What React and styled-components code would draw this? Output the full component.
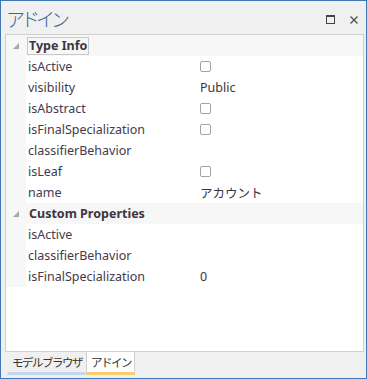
import React from 'react';
import styled, { createGlobalStyle } from 'styled-components';

const GlobalStyle = createGlobalStyle`
    html, body {
        margin: 0;
        padding: 0;
        background: #f0f0f0;
    }
    * {
        box-sizing: border-box;
    }
`;

const Frame = styled.div`
    width: 367px;
    height: 379px;
    display: flex;
    flex-direction: column;
    border: 1px solid #3f76b5;
    background: #f0f0f0;
    font-family: 'Noto Sans', 'Noto Sans CJK JP', sans-serif;
`;

const TitleBar = styled.div`
    height: 33px;
    display: flex;
    align-items: center;
    padding: 0 8px 0 5px;
`;

const Title = styled.div`
    flex: 1;
    font-family: 'Noto Sans CJK JP', sans-serif;
    font-size: 19px;
    font-weight: 300;
    letter-spacing: -4px;
    color: #3a6594;
    margin-top: 1px;
`;

const TitleButtons = styled.div`
    display: flex;
    align-items: center;
    gap: 15px;
    color: #555;
    margin-top: 4px;
`;

const Panel = styled.div`
    flex: 1;
    margin: 0 2px 0 4px;
    border: 1px solid #cfcfcf;
    background: #fff;
    display: flex;
    flex-direction: column;
`;

const Row = styled.div`
    height: 21px;
    display: grid;
    grid-template-columns: 20px 171px 1fr;
    align-items: center;
    background: ${(p) => (p.$category ? '#f7f7f7' : '#fff')};
`;

const Gutter = styled.div`
    height: 100%;
    background: #f7f7f7;
    display: flex;
    align-items: center;
    justify-content: center;
`;

const Label = styled.div`
    padding-left: 2px;
    font-size: 12.5px;
    color: #443a4c;
    white-space: nowrap;
`;

const CategoryLabel = styled.div`
    justify-self: start;
    margin-left: 1px;
    padding: 0 1px;
    height: 18px;
    line-height: 16px;
    border: 1px solid ${(p) => (p.$focused ? '#c8c8c8' : 'transparent')};
    font-size: 12.5px;
    font-weight: bold;
    color: #3d3540;
    white-space: nowrap;
`;

const Value = styled.div`
    padding-left: 3px;
    font-size: 12.5px;
    color: #3b3540;
    display: flex;
    align-items: center;
`;

const Check = styled.span`
    width: 11px;
    height: 11px;
    border: 1px solid #a3a3a3;
    border-radius: 2px;
    background: #fff;
`;

const TabStrip = styled.div`
    height: 26px;
    display: flex;
    align-items: flex-start;
    padding-left: 6px;
`;

const Tab = styled.div`
    height: 23px;
    padding: 2px 3px 0 4px;
    font-family: 'Noto Sans CJK JP', sans-serif;
    font-size: 11.5px;
    letter-spacing: -1.5px;
    color: #333;
    background: ${(p) => (p.$active ? '#fff' : 'transparent')};
    border: 1px solid ${(p) => (p.$active ? '#d0d0d0' : 'transparent')};
    border-top: none;
    border-bottom: 3px solid ${(p) => (p.$active ? '#f7ce6a' : '#c6d5ee')};
`;

const Arrow = () => (
    <svg width="6" height="6" viewBox="0 0 6 6">
        <path d="M6 0 L6 6 L0 6 Z" fill="#a8a8a8" />
    </svg>
);

const typeInfo = [
    { name: 'isActive', check: true },
    { name: 'visibility', value: 'Public' },
    { name: 'isAbstract', check: true },
    { name: 'isFinalSpecialization', check: true },
    { name: 'classifierBehavior' },
    { name: 'isLeaf', check: true },
    { name: 'name', value: 'アカウント' }
];

const customProps = [
    { name: 'isActive' },
    { name: 'classifierBehavior' },
    { name: 'isFinalSpecialization', value: '0' }
];

const PropRow = ({ item }) => (
    <Row>
        <Gutter />
        <Label>{item.name}</Label>
        <Value>{item.check ? <Check /> : item.value}</Value>
    </Row>
);

const Category = ({ title, focused }) => (
    <Row $category>
        <Gutter>
            <Arrow />
        </Gutter>
        <CategoryLabel $focused={focused}>{title}</CategoryLabel>
        <div />
    </Row>
);

export default function App() {
    return (
        <>
            <GlobalStyle />
            <Frame>
                <TitleBar>
                    <Title>アドイン</Title>
                    <TitleButtons>
                        <svg width="9" height="9" viewBox="0 0 9 9">
                            <rect x="0.5" y="0.5" width="8" height="8" fill="none" stroke="#444" />
                            <line x1="0" y1="1.5" x2="9" y2="1.5" stroke="#444" />
                        </svg>
                        <svg width="8" height="8" viewBox="0 0 8 8">
                            <path d="M0.5 0.5 L7.5 7.5 M7.5 0.5 L0.5 7.5" stroke="#555" strokeWidth="1.4" />
                        </svg>
                    </TitleButtons>
                </TitleBar>
                <Panel>
                    <Category title="Type Info" focused />
                    {typeInfo.map((item, i) => (
                        <PropRow key={'t' + i} item={item} />
                    ))}
                    <Category title="Custom Properties" />
                    {customProps.map((item, i) => (
                        <PropRow key={'c' + i} item={item} />
                    ))}
                </Panel>
                <TabStrip>
                    <Tab>モデルブラウザ</Tab>
                    <Tab $active>アドイン</Tab>
                </TabStrip>
            </Frame>
        </>
    );
}
